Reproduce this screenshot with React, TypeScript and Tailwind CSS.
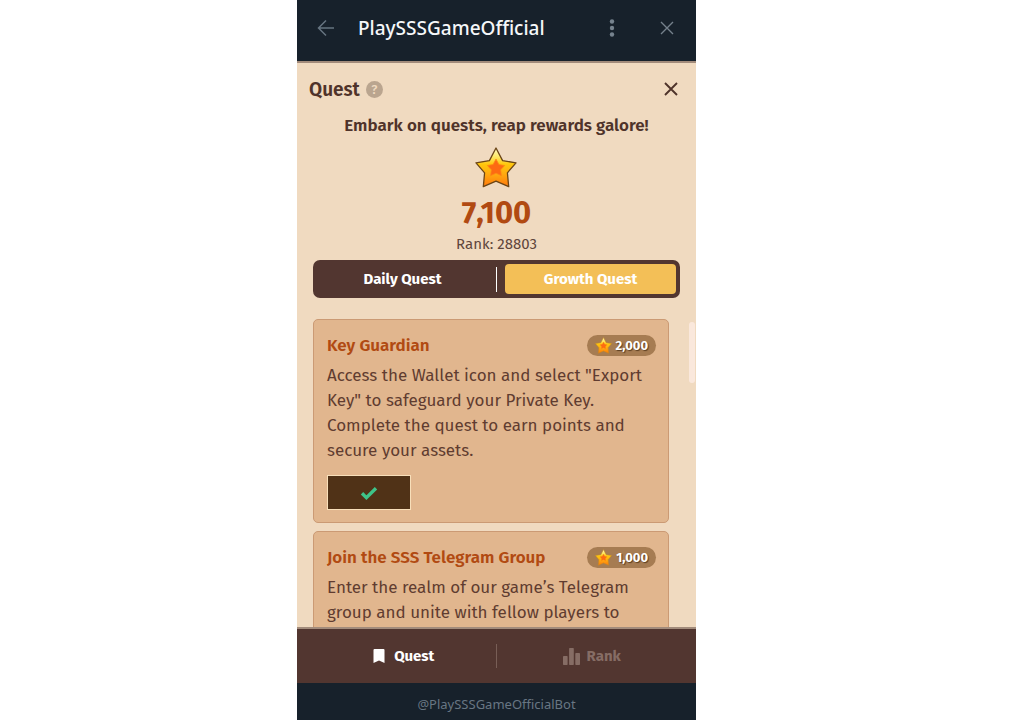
import { useId, useState } from "react";

type Quest = { title: string; reward: string; text: string; done: boolean };

const quests: Quest[] = [
  {
    title: "Key Guardian",
    reward: "2,000",
    text: 'Access the Wallet icon and select "Export Key" to safeguard your Private Key. Complete the quest to earn points and secure your assets.',
    done: true,
  },
  {
    title: "Join the SSS Telegram Group",
    reward: "1,000",
    text: "Enter the realm of our game’s Telegram group and unite with fellow players to",
    done: false,
  },
];

function Star({ className, outline }: { className: string; outline: string }) {
  const id = useId();
  return (
    <svg viewBox="0 0 42 41" className={className} aria-hidden="true">
      <defs>
        <linearGradient id={id} x1="0" y1="0" x2="0" y2="1">
          <stop offset="0" stopColor="#fffbc4" />
          <stop offset="0.22" stopColor="#ffe96a" />
          <stop offset="0.42" stopColor="#ffc70c" />
          <stop offset="0.65" stopColor="#ffad10" />
          <stop offset="1" stopColor="#ff780c" />
        </linearGradient>
      </defs>
      <path
        d="M21 1 27.6 13.6 41 15.8 32.4 25.8 33.7 39.7 21 34.2 8.3 39.7 9.6 25.8 1 15.8 14.4 13.6Z"
        fill={`url(#${id})`}
        stroke={outline}
        strokeWidth="1.3"
        strokeLinejoin="round"
      />
      <path
        d="M21 12 23.9 17.5 29.6 18.5 25.7 22.8 26.4 28.7 21 26.2 15.6 28.7 16.3 22.8 12.4 18.5 18.1 17.5Z"
        fill="#fd6a12"
        stroke="#fd8a14"
        strokeWidth="0.8"
      />
    </svg>
  );
}

function QuestCard({ quest }: { quest: Quest }) {
  return (
    <article className="shrink-0 rounded-[5px] border border-[#cb9a74] bg-[#e1b68e] pt-[13px] pr-3 pb-3 pl-[13px]">
      <div className="flex items-center justify-between">
        <h3 className="pt-px text-[17px] leading-6 font-semibold text-[#b14a12]">{quest.title}</h3>
        <span className="flex h-[21px] items-center gap-1 rounded-full bg-[#a67c52] px-2 text-[13px] font-bold text-white">
          <Star className="h-[17px] w-[17px]" outline="#c98a1c" />
          <span className="[text-shadow:1px_1px_1px_#5b3d20]">{quest.reward}</span>
        </span>
      </div>
      <p className="mt-[5px] text-[17px] leading-[25px] text-[#603c30]">{quest.text}</p>
      {quest.done && (
        <button
          type="button"
          aria-label="Completed"
          className="mt-3 flex h-[35px] w-[84px] items-center justify-center border border-[#f8dfba] bg-[#503217]"
        >
          <svg viewBox="0 0 18 14" className="h-[14px] w-[18px]" aria-hidden="true">
            <path d="M2 7.3 6.4 11.6 16 2.2" fill="none" stroke="#3ec489" strokeWidth="3.4" />
          </svg>
        </button>
      )}
    </article>
  );
}

export default function App() {
  const [tab, setTab] = useState<"daily" | "growth">("growth");
  const tabBase = "h-[30px] rounded-[4px] text-[15px] font-bold text-white";

  return (
    <div className="flex h-screen justify-center bg-white pr-[21px] font-['Fira_Sans','Noto_Sans',sans-serif]">
      <div className="flex w-full max-w-[399px] flex-col overflow-hidden bg-[#17212b]">
        <header className="flex h-[61px] shrink-0 items-center pr-[22px] pb-[5px] pl-5 font-['Noto_Sans',sans-serif]">
          <button type="button" aria-label="Back">
            <svg viewBox="0 0 18 18" className="h-[18px] w-[18px]" fill="none" stroke="#667480" strokeWidth="1.5">
              <path d="M17 9H1.5M9 1.5 1.5 9 9 16.5" />
            </svg>
          </button>
          <h1 className="ml-[23px] flex-1 text-[19px] font-medium text-[#f5f7f9]">PlaySSSGameOfficial</h1>
          <button type="button" aria-label="Menu">
            <svg viewBox="0 0 6 18" className="h-[18px] w-[6px]" fill="#76838e">
              <circle cx="3" cy="2.5" r="2.2" />
              <circle cx="3" cy="9" r="2.2" />
              <circle cx="3" cy="15.5" r="2.2" />
            </svg>
          </button>
          <button type="button" aria-label="Close app" className="ml-[45px]">
            <svg viewBox="0 0 14 14" className="h-[14px] w-[14px]" fill="none" stroke="#75818c" strokeWidth="1.4">
              <path d="M1 1 13 13M13 1 1 13" />
            </svg>
          </button>
        </header>

        <main className="relative flex min-h-0 flex-1 flex-col border-t-2 border-[#a28b7b] bg-[#f0dac0]">
          <div className="flex h-[53px] shrink-0 items-center pr-[18px] pl-3">
            <h2 className="pt-px text-[19px] font-semibold text-[#4f332a]">Quest</h2>
            <button
              type="button"
              aria-label="Help"
              className="ml-[6px] h-[17px] w-[17px] rounded-full bg-[#baa58f] text-[13px] leading-[17px] font-medium text-[#f0dac0]"
            >
              ?
            </button>
            <button type="button" aria-label="Close quests" className="ml-auto pb-[2px]">
              <svg viewBox="0 0 14 14" className="h-[14px] w-[14px]" fill="none" stroke="#4f332a" strokeWidth="1.9">
                <path d="M1 1 13 13M13 1 1 13" />
              </svg>
            </button>
          </div>

          <section className="flex shrink-0 flex-col items-center text-[#4f332a]">
            <p className="text-[17px] leading-5 font-semibold">Embark on quests, reap rewards galore!</p>
            <Star className="mt-[11px] mr-px h-[41px] w-[42px]" outline="#6b4516" />
            <p className="mt-[9px] text-[31px] leading-8 font-bold text-[#b14a12]">7,100</p>
            <p className="mt-[5px] text-[15px] leading-5 text-[#5f463c]">Rank: 28803</p>
          </section>

          <div className="mx-4 mt-[6px] grid h-[38px] shrink-0 grid-cols-2 items-center rounded-[7px] bg-[#523630] p-1 pl-[3px]" role="tablist">
            <div className="flex items-center">
              <button
                type="button"
                role="tab"
                aria-selected={tab === "daily"}
                onClick={() => setTab("daily")}
                className={`${tabBase} mr-[7px] flex-1 ${tab === "daily" ? "bg-[#f3bf57]" : ""}`}
              >
                Daily Quest
              </button>
            </div>
            <div className="flex items-center">
              <span className="h-[25px] w-px bg-white" />
              <button
                type="button"
                role="tab"
                aria-selected={tab === "growth"}
                onClick={() => setTab("growth")}
                className={`${tabBase} ml-2 flex-1 ${tab === "growth" ? "bg-[#f3bf57]" : ""}`}
              >
                Growth Quest
              </button>
            </div>
          </div>

          <div className="relative mt-[21px] flex min-h-0 flex-1 flex-col">
            <div className="flex min-h-0 flex-1 flex-col gap-2 overflow-hidden pr-[27px] pl-4">
              {quests.map((quest) => (
                <QuestCard key={quest.title} quest={quest} />
              ))}
            </div>
            <div className="absolute top-[3px] right-px h-[61px] w-[6px] rounded-sm bg-[#fae8dc]" />
          </div>
        </main>

        <nav className="flex h-[56px] shrink-0 items-center border-t-2 border-[#a28b7b] bg-[#523630] text-[15px]">
          <a href="#quest" className="flex w-1/2 items-center justify-center gap-[9px] pl-[14px] font-bold text-white">
            <svg viewBox="0 0 12 14" className="h-[14px] w-3" fill="currentColor" aria-hidden="true">
              <path d="M1.5 0H10.5Q11.5 0 11.5 1V14L6 11.5.5 14V1Q.5 0 1.5 0Z" />
            </svg>
            Quest
          </a>
          <span className="-ml-px h-6 w-px bg-[#785e56]" />
          <a href="#rank" className="flex w-1/2 items-center justify-center gap-[7px] pr-[9px] font-bold text-[#866d65]">
            <svg viewBox="0 0 17 17" className="h-[17px] w-[17px]" fill="currentColor" aria-hidden="true">
              <rect x="0" y="8" width="4.6" height="9" rx=".7" />
              <rect x="6.1" y="0" width="4.7" height="17" rx=".7" />
              <rect x="12.3" y="5" width="4.7" height="12" rx=".7" />
            </svg>
            Rank
          </a>
        </nav>

        <footer className="flex h-[37px] shrink-0 items-center justify-center pt-[6px] font-['Noto_Sans',sans-serif] text-[13px] text-[#687683]">
          @PlaySSSGameOfficialBot
        </footer>
      </div>
    </div>
  );
}
